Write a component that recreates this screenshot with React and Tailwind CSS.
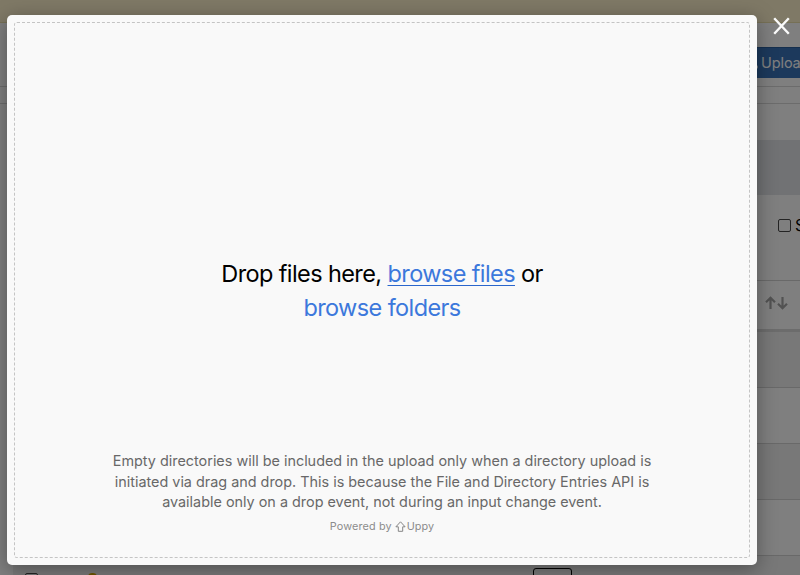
import React from "react";

function UppyArrow() {
  return (
    <svg width="11" height="11" viewBox="0 0 11 11" fill="none" stroke="#858585" strokeWidth="1">
      <path d="M3.3 10.3V5.8H0.9L5.5 0.8L10.1 5.8H7.7V10.3Z" strokeLinejoin="round" />
    </svg>
  );
}

function SortArrows() {
  return (
    <svg width="24" height="14" viewBox="0 0 24 14" fill="none" stroke="#a4a4a4" strokeWidth="2.2">
      <path d="M5.5 13V2M1 6.3L5.5 1.8L10 6.3M17.5 1V12M13 7.7L17.5 12.2L22 7.7" />
    </svg>
  );
}

function TableRow({ shaded, children }) {
  return (
    <div className={`h-14 shrink-0 border-b border-[#d3d3d3] ${shaded ? "bg-[#f0f0f0]" : "bg-white"}`}>
      {children}
    </div>
  );
}

function Page() {
  return (
    <div className="flex h-full flex-col overflow-hidden bg-white">
      <div className="h-[23px] shrink-0 border-b border-[#ece0ac] bg-[#fff3cd]" />
      <div className="flex h-16 shrink-0 items-start justify-end border-b border-[#d8d8d8] pt-6">
        <div className="flex h-[31px] w-[60px] items-center overflow-hidden whitespace-nowrap border-t border-[#2b5f9d] bg-[#3973b9] pl-[15px] text-[14.5px] text-white">
          <span className="mt-2 h-1 w-[3px] shrink-0 rounded-r-sm bg-white" />
          <span className="ml-[3px] tracking-[-0.1px]">Upload</span>
        </div>
      </div>
      <div className="h-[17px] shrink-0 border-b border-[#d8d8d8]" />
      <div className="h-9 shrink-0" />
      <div className="ml-[13px] flex flex-1 flex-col overflow-hidden">
        <div className="h-[55px] shrink-0 bg-[#e2e5e9]" />
        <div className="flex h-[86px] shrink-0 items-start justify-end overflow-hidden border-b border-[#d3d3d3] pt-[20px]">
          <div className="flex w-[22px] items-center whitespace-nowrap text-[16px] leading-5 text-black">
            <span className="h-[13px] w-[13px] shrink-0 rounded-[2px] border border-[#484848]" />
            <span className="ml-[4px]">Show</span>
          </div>
        </div>
        <div className="flex h-[51px] shrink-0 items-start justify-end border-b-3 border-[#d8d8d8] pt-[15px] pr-[11px]">
          <SortArrows />
        </div>
        <TableRow shaded />
        <TableRow />
        <TableRow shaded />
        <TableRow />
        <TableRow shaded>
          <div className="flex items-start pt-3">
            <span className="mt-[5px] ml-3 h-[13px] w-[13px] rounded-[2px] border border-[#484848]" />
            <span className="mt-[5px] ml-[50px] h-3 w-[9px] rounded-t-sm bg-[#d6ab00]" />
            <span className="ml-[436px] h-8 w-[39px] rounded-[3px] border border-black" />
          </div>
        </TableRow>
      </div>
    </div>
  );
}

function DropModal() {
  return (
    <div className="h-[550px] w-[750px] rounded-[5px] bg-[#f9f9f9] p-[7px] shadow-[0_4px_20px_rgba(0,0,0,0.35)]">
      <div className="flex h-full flex-col items-center rounded-[3px] border border-dashed border-[#c4c4c4] pt-[234px]">
        <div className="text-center text-[23.5px] leading-[34px] tracking-[-0.6px] text-black">
          <div className="h-[34px] whitespace-nowrap">
            Drop files here,{" "}
            <span className="text-[#3c78dc] underline decoration-[#2a66cc] decoration-1 underline-offset-[3px] [text-decoration-skip-ink:none]">browse files</span> or
          </div>
          <div className="text-[#3c78dc]">browse folders</div>
        </div>
        <div className="mt-[126px] text-center text-[14.4px] leading-[20.5px] whitespace-nowrap text-[#686868]">
          <div>Empty directories will be included in the upload only when a directory upload is</div>
          <div>initiated via drag and drop. This is because the File and Directory Entries API is</div>
          <div>available only on a drop event, not during an input change event.</div>
        </div>
        <div className="mt-[6px] flex items-center text-[10.8px] leading-4 whitespace-nowrap text-[#8b8b8b]">
          <span className="tracking-[0.15px]">Powered by</span>
          <span className="ml-[3px]"><UppyArrow /></span>
          <span className="ml-px tracking-[0.1px]">Uppy</span>
        </div>
      </div>
    </div>
  );
}

export default function App() {
  return (
    <div className="relative h-[575px] w-[800px] overflow-hidden font-['Inter','Liberation_Sans',sans-serif]">
      <Page />
      <div className="absolute inset-0 flex items-start bg-black/50 pt-[15px] pl-[7px]">
        <DropModal />
        <svg className="mt-[2px] ml-[16px]" width="17" height="18" viewBox="0 0 17 18" fill="none" stroke="#fafafa" strokeWidth="2.4">
          <path d="M1.2 1.2L15.8 16.8M15.8 1.2L1.2 16.8" />
        </svg>
      </div>
    </div>
  );
}
